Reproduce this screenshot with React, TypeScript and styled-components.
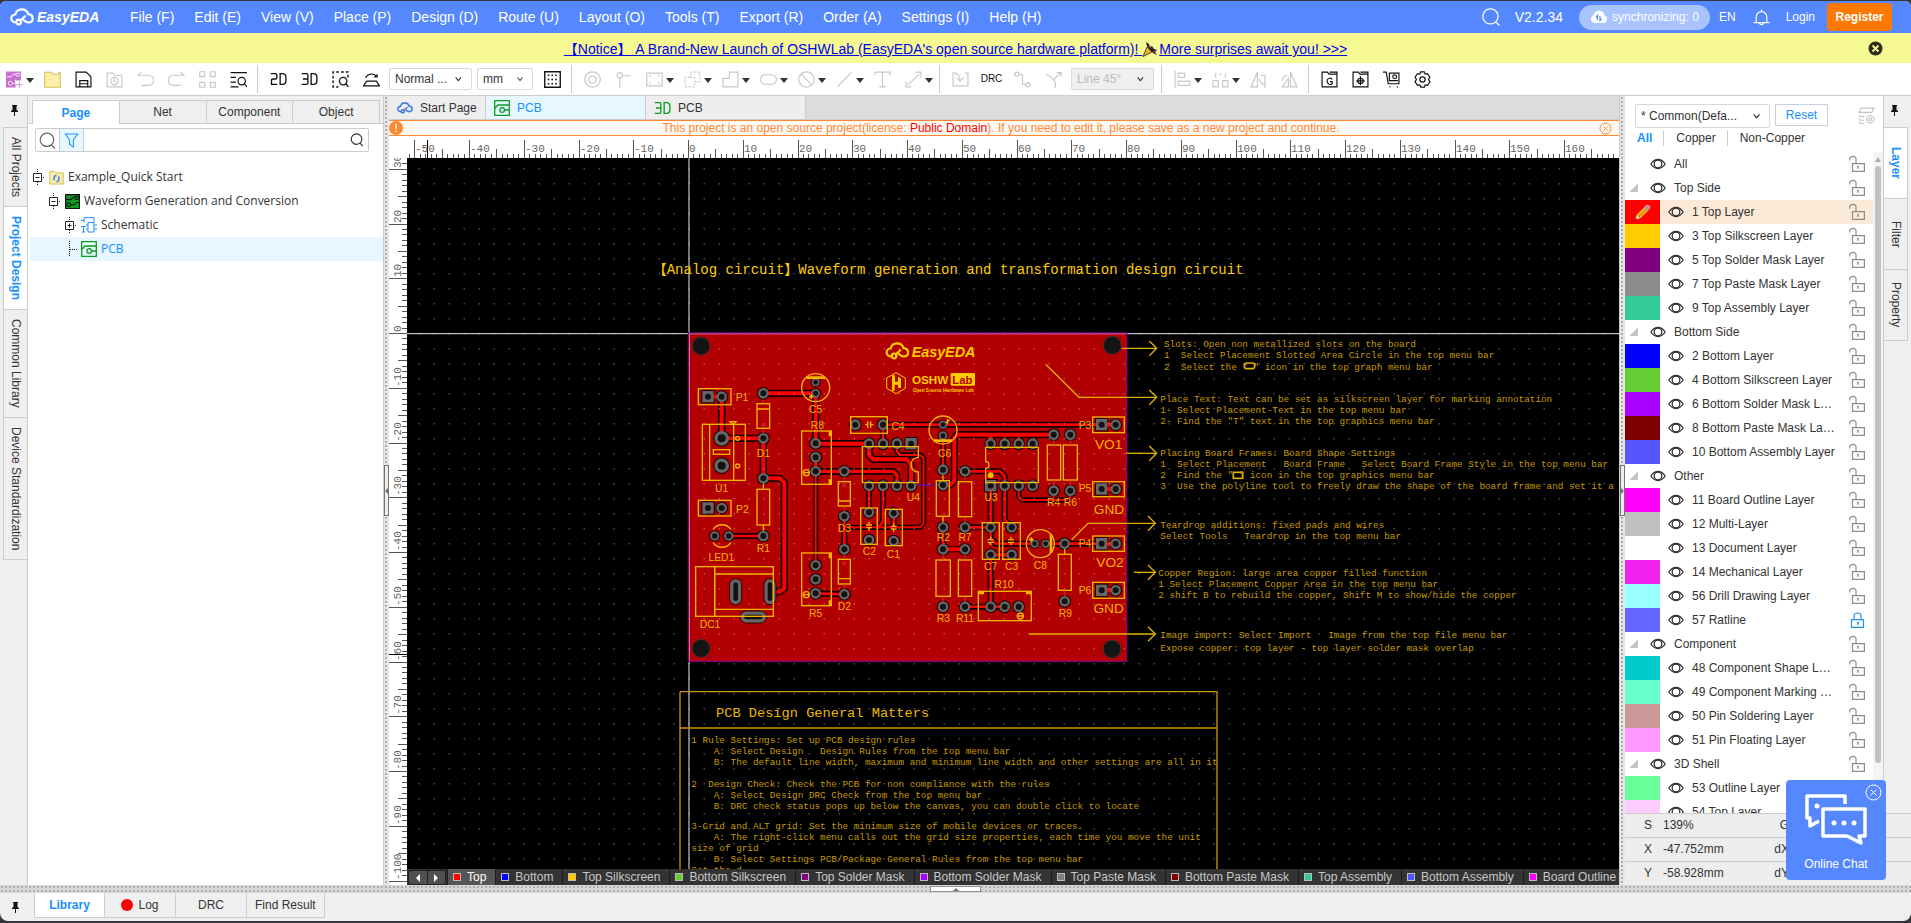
import React from "react";
import styled, { createGlobalStyle, css } from "styled-components";

const Global = createGlobalStyle`
  *, *::before, *::after { box-sizing: border-box; }
  html, body, #root { height: 100%; margin: 0; }
  body { background: #35363a; font: 12px/16px "Liberation Sans", "Noto Sans CJK SC", sans-serif; color: #333; }
  button { font: inherit; color: inherit; background: none; border: 0; padding: 0; margin: 0; cursor: pointer; }
  ul { list-style: none; margin: 0; padding: 0; }
`;

const BLUE = "#5588ff";
const ACCENT = "#1890ff";
const LINE = "#cccccc";

/* ---------- frame ---------- */
const Frame = styled.div`height: 100vh; padding: 1px 0 2px; display: flex;`;
const Shell = styled.div`
  flex: 1; min-width: 0; display: flex; flex-direction: column; background: #efefef;
  border-radius: 6px 6px 8px 8px; overflow: hidden; position: relative;
`;

/* ---------- header ---------- */
const Header = styled.header`
  height: 32px; flex: none; background: ${BLUE}; color: #fff; display: flex; align-items: center; padding: 0 19px 0 10px;
`;
const Brand = styled.a`
  display: flex; align-items: center; gap: 3px; width: 120px; color: #fff; text-decoration: none;
  font: italic bold 14px/20px "Liberation Sans", sans-serif;
`;
const Menu = styled.nav`display: flex; gap: 20px; font-size: 14px; flex: 1; button { white-space: nowrap; }`;
const HeaderTools = styled.div`display: flex; align-items: center;`;
const Version = styled.span`font-size: 14px; margin: 0 16px 0 15px;`;
const SyncPill = styled.button`
  height: 25px; width: 131px; border-radius: 13px; background: #a9c3ff; display: flex; align-items: center; justify-content: center; gap: 4px; margin-right: 9px;
`;
const BellBtn = styled.button`margin: 0 16px 0 17px; display: flex;`;
const Register = styled.button`
  margin-left: 12px; width: 65px; height: 28px; background: #ff7800; border-radius: 4px; font-weight: bold;
`;

const Notice = styled.div`
  height: 30px; flex: none; background: #f6f892; display: flex; align-items: center; padding: 0 28px 0 43px; font-size: 14px;
  a { color: #0000ee; margin: 0 auto; padding-top: 2px; display: flex; }
`;

/* ---------- toolbar ---------- */
const Bar = styled.div`
  height: 33px; flex: none; background: #fff; border-bottom: 1px solid ${LINE}; display: flex; align-items: center; margin-left: -1px;
`;
const Tool = styled.button<{ $off?: boolean; $caret?: boolean }>`
  width: ${(p) => (p.$caret ? 38 : 31)}px; height: 32px; flex: none; display: flex; align-items: center; gap: 3px;
  padding-left: ${(p) => (p.$caret ? 7 : 0)}px; justify-content: ${(p) => (p.$caret ? "flex-start" : "center")};
  color: ${(p) => (p.$off ? "#c8c8c8" : "#111")}; font-size: 10px;
`;
const Caret = styled.span`border: 4px solid transparent; border-top: 5px solid #333; border-bottom: 0; margin-top: 3px;`;
const Sep = styled.i`width: 1px; height: 28px; background: ${LINE}; margin: 0 5px 0 3px; flex: none;`;
const SelectBox = styled.span<{ $w: number; $h?: number; $off?: boolean }>`
  width: ${(p) => p.$w}px; height: ${(p) => p.$h ?? 22}px; border: 1px solid #d6d8de; border-radius: 2px; display: flex; align-items: center; flex: none;
  background: ${(p) => (p.$off ? "#efefef" : "#fff")}; padding-right: 8px;
  select {
    appearance: none; border: 0; background: none; font: inherit; padding: 0 0 0 5px; width: 100%; min-width: 0; outline: 0; opacity: 1;
    color: ${(p) => (p.$off ? "#bbb" : "#333")};
  }
`;
const BarSelect = styled(SelectBox)`margin: 0 4px 0 2px; & + & { margin-left: 1px; }`;

/* ---------- body ---------- */
const Body = styled.div`flex: 1; min-height: 0; display: flex;`;

const Strip = styled.aside<{ $side: "left" | "right" }>`
  flex: none; width: 28px; display: flex; flex-direction: column; background: #efefef;
  ${(p) => p.$side === "left"
    ? css`padding-left: 4px; border-right: 1px solid ${LINE};`
    : css`padding-right: 4px; border-left: 1px solid ${LINE};`}
`;
const PinBtn = styled.button`height: 32px; flex: none; display: flex; align-items: center; justify-content: center; padding: 0 3px 4px 0;`;
const SideTab = styled.button<{ $on?: boolean }>`
  writing-mode: vertical-rl; min-height: 72px; padding: 9px 0; display: flex; align-items: center; justify-content: center;
  border: 1px solid ${LINE}; margin: -1px -1px 0; line-height: 20px;
  ${(p) => p.$on && css`background: #fff; color: ${ACCENT}; font-weight: bold;`}
`;

const LeftPanel = styled.section`flex: none; width: 355px; background: #fff; display: flex; flex-direction: column;`;
const PanelTabs = styled.div`background: #efefef; padding: 4px 3px 0 4px; display: flex; border-bottom: 1px solid ${LINE};`;
const PanelTab = styled.button<{ $on?: boolean }>`
  flex: 1; height: 23px; border: 1px solid ${LINE}; border-bottom: 0; & + & { border-left: 0; }
  ${(p) => p.$on && css`background: #fff; color: ${ACCENT}; font-weight: bold; height: 24px; margin-bottom: -1px;`}
`;
const Search = styled.div`
  margin: 4px 14px 0 7px; height: 24px; border: 1px solid ${LINE}; border-radius: 2px; display: flex; align-items: center; padding-right: 4px;
  input { flex: 1; min-width: 0; border: 0; outline: 0; font: inherit; height: 20px; }
`;
const SearchCell = styled.button<{ $on?: boolean }>`
  width: 24px; height: 22px; display: flex; align-items: center; justify-content: center; border-right: 1px solid ${LINE};
  color: ${(p) => (p.$on ? ACCENT : "#666")}; background: ${(p) => (p.$on ? "#e6f7ff" : "none")};
`;
const Tree = styled.ul`margin: 13px 0 0 2px; font: 12px/24px "Open Sans", sans-serif;`;
const TreeRow = styled.li<{ $depth: number; $on?: boolean }>`
  height: 24px; display: flex; align-items: center; gap: 4px; padding-left: ${(p) => 3 + p.$depth * 16}px;
  ${(p) => p.$on && css`background: #e6f7ff; color: ${ACCENT};`}
`;

const dots = css`background-image: radial-gradient(circle, #b0b0b0 1px, transparent 1px); background-size: 4px 4px;`;
const VSplit = styled.div`
  flex: none; width: 6px; background-color: #e6e6e6; ${dots} border-left: 1px solid ${LINE};
  display: flex; align-items: center;
`;
const HSplit = styled.div`flex: none; height: 8px; background-color: #d8d8d8; ${dots} display: flex; justify-content: center; align-items: center;`;
const VGrip = styled.i<{ $dir: "left" | "right" }>`
  width: 5px; height: 51px; border: 1px solid #7a6e6e; background: #eee; flex: none; display: flex; align-items: center; justify-content: center;
  &::after { content: ""; border: 3px solid transparent; border-${(p) => (p.$dir === "left" ? "right" : "left")}-color: #776e6e; border-${(p) => p.$dir}: 0; }
`;
const HGrip = styled.i`width: 51px; height: 6px; border: 1px solid #9a9090; background: #fff; display: flex; justify-content: center; align-items: center;
  &::after { content: ""; border: 3px solid transparent; border-bottom-color: #776e6e; border-top: 0; }`;

/* ---------- editor ---------- */
const Editor = styled.main`flex: 1; min-width: 0; display: flex; flex-direction: column; background: #fff;`;
const DocTabs = styled.div`height: 24px; flex: none; background: #dcdcdc; display: flex; border-bottom: 1px solid ${LINE};`;
const DocTab = styled.button<{ $on?: boolean; $wide?: boolean }>`
  width: ${(p) => (p.$wide ? 160 : 97)}px; height: 23px; display: flex; align-items: center; gap: 7px; padding-left: 8px; background: ${(p) => (p.$on ? "#e6f7ff" : "#eeeeee")};
  color: ${(p) => (p.$on ? ACCENT : "#333")}; border-right: 1px solid ${LINE};
`;
const Green = styled.span`color: #0a9d20; display: flex;`;
const License = styled.div`
  height: 16px; flex: none; border: 1px solid #ff8833; border-width: 1px 0; background: #fff8f3; color: #ff8833; display: flex; align-items: center; line-height: 14px;
  p { margin: 0 auto; } strong { color: #ff0000; font-weight: normal; } padding-right: 7px;
`;
const RulerH = styled.svg`display: block; width: 100%; height: 22px; flex: none;`;
const Stage = styled.div`flex: 1; min-height: 0; display: flex;`;
const RulerV = styled.svg`display: block; width: 18px; height: 100%; flex: none;`;
const StageCol = styled.div`flex: 1; min-width: 0; display: flex; flex-direction: column;`;
const Canvas = styled.div`
  flex: 1; min-height: 0; overflow: hidden; background: #000;
  svg { display: block; }
`;
const LayerTabs = styled.div`height: 16px; flex: none; background: #333; color: #c8c8c8; display: flex; overflow: hidden;`;
const Nav = styled.div`
  width: 38px; margin: 1px 1px 0 1px; border: 1px solid #222; border-radius: 3px; background: #505050; display: flex; flex: none;
  button { flex: 1; display: flex; align-items: center; justify-content: center; } button + button { border-left: 1px solid #222; }
`;
const Prev = styled.i`border: 4px solid transparent; border-right-color: #fff; border-left: 0;`;
const Next = styled.i`border: 4px solid transparent; border-left-color: #fff; border-right: 0;`;
const LayerTab = styled.button<{ $on?: boolean }>`
  display: flex; align-items: center; gap: 6px; padding: 0 9px 0 5px; border-left: 1px solid #1c1c1c; white-space: nowrap; flex: none;
  ${(p) => p.$on && css`background: #555; color: #fff;`}
`;
const Chip = styled.i<{ $c: string }>`width: 8px; height: 8px; border: 1px solid #bbb; background: ${(p) => p.$c};`;

/* ---------- right panel ---------- */
const Right = styled.div`flex: none; width: 286px; display: flex; flex-direction: column; background: #ededed;`;
const RightTop = styled.div`flex: 1; min-height: 0; display: flex;`;
const LayerPanel = styled.section`flex: 1; min-width: 0; background: #fff; display: flex; flex-direction: column;`;
const PanelHead = styled.div`display: flex; align-items: flex-start; padding: 8px 8px 0 10px;`;
const ResetBtn = styled.button`width: 53px; height: 22px; border: 1px solid #c8d0dc; color: ${ACCENT}; margin-left: 5px;`;
const StackBtn = styled.button`margin: 3px 0 0 auto; color: #c4c4c4; display: flex;`;
const Filters = styled.div`display: flex; height: 20px; margin: 0 0 4px; padding-left: 12px; align-items: center;
  button + button { border-left: 1px solid ${LINE}; margin-left: 11px; padding-left: 12px; }`;
const FilterBtn = styled.button<{ $on?: boolean }>`${(p) => p.$on && css`color: ${ACCENT}; font-weight: bold;`}`;
const ListWrap = styled.div`flex: 1; min-height: 0; display: flex; overflow: hidden;`;
const List = styled.ul`flex: 1; min-width: 0;`;
const LayerRow = styled.li<{ $on?: boolean }>`
  height: 24px; display: flex; align-items: center; padding-right: 8px; background: ${(p) => (p.$on ? "#faead7" : "#fff")};
`;
const Swatch = styled.span<{ $c: string }>`
  width: 35px; height: 24px; background: ${(p) => p.$c}; flex: none; margin-right: 8px; display: flex; align-items: center; justify-content: center;
`;
const Fold = styled.span<{ $hide?: boolean }>`
  width: 8px; height: 8px; margin: 0 12px 0 5px; flex: none;
  background: ${(p) => (p.$hide ? "none" : "linear-gradient(135deg, transparent 50%, #c4c4c4 50%)")};
`;
const IconBtn = styled.button`display: flex; flex: none;`;
const Name = styled.span`flex: 0 1 145px; margin: 0 auto 0 8px; min-width: 0; overflow: hidden; text-overflow: ellipsis; white-space: nowrap;`;
const Scroll = styled.div`width: 10px; flex: none; background: #f4f4f4; display: flex; flex-direction: column; align-items: center; padding-top: 5px;
  &::before { content: ""; border: 3px solid transparent; border-bottom: 5px solid #aaa; border-top: 0; margin-bottom: 4px; flex: none; }`;
const Thumb = styled.i`width: 6px; height: 597px; border-radius: 3px; background: #c1c1c1; flex: none;`;
const Status = styled.dl`
  margin: 0; flex: none; display: grid; grid-template-columns: 27px 98px 39px 1fr; line-height: 23px; height: 72px;
  dt, dd { margin: 0; border-top: 1px solid ${LINE}; height: 24px; } dt { text-align: right; } dd { padding-left: 11px; }
`;

/* ---------- bottom ---------- */
const Bottom = styled.footer`height: 28px; flex: none; display: flex; align-items: flex-start;`;
const BottomPin = styled.button`width: 34px; height: 28px; display: flex; align-items: center; justify-content: center; padding-right: 4px;`;
const BottomTab = styled.button<{ $on?: boolean }>`
  height: 25px; min-width: 71px; padding: 0 8px; border: 1px solid ${LINE}; border-top: 0; & + & { border-left: 0; } display: flex; align-items: center; justify-content: center; gap: 5px;
  ${(p) => p.$on && css`background: #fff; color: ${ACCENT}; font-weight: bold;`}
`;
const Red = styled.i`width: 12px; height: 12px; border-radius: 50%; background: #ff0000;`;

const Chat = styled.aside`
  position: absolute; right: 25px; bottom: 41px; width: 100px; height: 100px; background: ${BLUE}; border-radius: 4px; color: #fff;
  display: flex; flex-direction: column; align-items: center; justify-content: flex-end; gap: 10px; padding-bottom: 8px;
`;
const ChatClose = styled.button`position: absolute; top: 4px; right: 4px; display: flex;`;

/* ---------- icons ---------- */
type IconProps = { d: string; size?: number; fill?: boolean; w?: number; children?: React.ReactNode };
const Icon = ({ d, size = 17, fill, w = 1.1, children }: IconProps) => (
  <svg width={size} height={size} viewBox="0 0 16 16" fill={fill ? "currentColor" : "none"} stroke={fill ? "none" : "currentColor"} strokeWidth={w} aria-hidden>
    <path d={d} />
    {children}
  </svg>
);
const Cloud = ({ w = 24, c = "currentColor", sw = 2.2 }: { w?: number; c?: string; sw?: number }) => (
  <svg width={w} height={(w * 18) / 24} viewBox="0 0 24 18" fill="none" stroke={c} strokeWidth={sw} strokeLinecap="round" aria-hidden>
    <path d="M6 14.5C3 14.500 1.300 12.600 1.300 10.500C1.300 8.300 3 6.600 5.300 6.500C6 3.300 8.600 1.300 11.700 1.300C15 1.300 17.400 3.200 18.200 6.200C20.800 6.400 22.700 8.200 22.700 10.500C22.700 12.900 20.900 14.500 18.500 14.500C16 14.500 14.600 13.200 13.200 11.800" />
    <path d="M10.300 12.500L15 8.200" />
    <circle cx="8.700" cy="14" r="2.300" />
  </svg>
);
const Chevron = () => <Icon size={10} w={2} d="M3 5l5 6 5-6" />;
const Eye = () => (
  <Icon size={16} w={1.3} d="M.8 8C2.800 5 5.200 3.500 8 3.500S13.200 5 15.200 8C13.200 11 10.800 12.500 8 12.500S2.800 11 .8 8z">
    <circle cx="8" cy="8" r="3.800" />
  </Icon>
);
const Lock = ({ closed }: { closed?: boolean }) => (
  <svg width="16" height="18" viewBox="0 0 16 18" fill="none" stroke={closed ? ACCENT : "#8c8c8c"} strokeWidth="1.200" aria-hidden>
    <path d={closed ? "M2.500 8.600H14.500V16.400H2.500zM5 8.500V5C5 1 12 1 12 5V8.500" : "M3.500 8.600H15.400V16.400H3.500zM.7 5.500V3.800C.7 .6 7 .6 7 3.800V8.500"} />
    <path d="M9 11v3M8 11.700h2" />
  </svg>
);
const Pin = () => (
  <svg width="7" height="11" viewBox="0 0 7 11" fill="#111" aria-hidden>
    <path d="M1 0H6V1H5.500V5L7 6V7H4V11H3V7H0V6L1.500 5V1H1z" />
  </svg>
);
const PcbIcon = () => (
  <svg width="16" height="16" viewBox="0 0 16 16" fill="none" stroke="#0a9d20" strokeWidth="1.300" aria-hidden>
    <path d="M.7 .7H15.300V15.300H.7zM.7 8.500L4 5H15M10.500 10H15" />
    <circle cx="8.200" cy="10" r="2.300" />
  </svg>
);

type ToolDef = { n: string; off?: boolean; caret?: boolean; el: React.ReactNode };
const t = (n: string, d: string, off = false, caret = false, extra?: React.ReactNode): ToolDef => ({
  n, off, caret, el: <Icon d={d}>{extra}</Icon>,
});
const Dim = ({ s }: { s: string }) => (
  <svg width="17" height="14" viewBox="0 0 20 17" fill="none" stroke="currentColor" strokeWidth="1.600" aria-hidden>
    <path d={s === "2"
      ? "M.5 2H6.500Q8 2 8 3.500V7Q8 8.500 6.500 8.500H3Q1.500 8.500 1.500 10V15H8.500"
      : "M.5 2H6.500Q8 2 8 3.500V13.500Q8 15 6.500 15H.5M2 8.500H8"} />
    <path d="M12 2V15H14.500Q19 15 19 10.500V6.500Q19 2 14.500 2z" />
  </svg>
);
const g1: ToolDef[] = [
  { n: "New", caret: true, el: (
    <svg width="17" height="17" viewBox="0 0 16 16" fill="none" aria-hidden>
      <path d="M0 .5H14V9H9V15.500H0z" fill="#c56fd0" />
      <path d="M1 5.500H4.500L7 3H9.500M6.500 11.500H9V8" stroke="#fff" strokeWidth=".8" />
      <circle cx="11" cy="3.500" r="1.600" stroke="#fff" strokeWidth=".8" /><circle cx="4" cy="11.500" r="1.900" stroke="#fff" strokeWidth=".8" />
      <path d="M12.500 10v6M9.500 13h6" stroke="#c0a0c8" />
    </svg>) },
  { n: "Open", el: (
    <svg width="17" height="17" viewBox="0 0 16 16" aria-hidden><path d="M.7 15.300V1.200H7L8.500 3H14V1.200H15.300V15.300z" fill="#faf0ac" stroke="#d8bf58" /></svg>) },
  t("Save", "M1 1H10.500L15 5.500V15H1zM4.500 15V9H12V15M4.500 12H12"),
  t("History", "M1 15V2H6L8 4H15V15z", true, false, <><circle cx="8" cy="9.500" r="3.500" /><path d="M8 7v3h1.500" /></>),
  t("Undo", "M4 1L1 4H11A4.500 4.500 0 0 1 11 13.500H4", true),
  t("Redo", "M12 1L15 4H5A4.500 4.500 0 0 0 5 13.500H12", true),
  t("Arrange", "M.7 .7h4.600v4.600H.7zM10.700 .7h4.600v4.600h-4.600zM.7 10.700h4.600v4.600H.7zM10.700 10.700h4.600v4.600h-4.600z", true),
  t("Find", "M.5 1.500H16M.5 6H5.500M.5 10.500H5.500M.5 15H8", false, false, <><circle cx="11" cy="9.500" r="3.500" /><path d="M13.500 12l2.500 3" /></>),
];
const g2: ToolDef[] = [
  { n: "2D", el: <Dim s="2" /> },
  { n: "3D", el: <Dim s="3" /> },
  { n: "Zoom selection", el: (
    <Icon d="M15 6V1H1V15H6" w={0}><path d="M15 6V1H1V15H6" strokeWidth="1.300" strokeDasharray="2.500 2" /><circle cx="10.500" cy="9.500" r="3.500" strokeWidth="1.200" /><path d="M13 12l2.500 3" strokeWidth="1.200" /></Icon>) },
  t("Flip board", "M3.500 9.500H12.500L15.500 14H.5zM2.500 6.500A6 6 0 0 1 13 5.500M10.500 5.500H13.300V3"),
];
const g3: ToolDef[] = [
  t("Pad", "M8 .8a7.200 7.200 0 1 0 .01 0zM8 4.500a3.500 3.500 0 1 0 .01 0z", true),
  t("Via track", "M4.500 6.500V16M7 4.500H15", true, false, <circle cx="4.500" cy="4" r="2.500" />),
  t("Rectangle region", "M.7 2H15.300V14H.7z", true, true, <path d="M3 4.500h1.500M11.500 4.500h1.500M3 11.500h1.500M11.500 11.500h1.500" strokeWidth="1.500" />),
  { n: "Fill", off: true, caret: true, el: (
    <Icon d="M6 1H15V10H10V15H1V6H6z" w={0}><path d="M6 1H15V10H10V15H1V6H6zM6 6h4v4" strokeWidth="1.100" strokeDasharray="2 1.500" /></Icon>) },
  t("Polygon", "M7 1H15V15H1V7H7z", true, true),
  t("Slot", "M5 3.500H11A4.500 4.500 0 0 1 11 12.500H5A4.500 4.500 0 0 1 5 3.500z", true, true),
  t("Forbidden", "M8 .8a7.200 7.200 0 1 0 .01 0zM3 3L13 13", true, true),
  t("Line", "M1.500 15L14.500 1", true, true),
  t("Text", "M1 4V1H15V4M8 1V15M5 15H11", true),
  t("Dimension", "M2.500 13L13.500 3M1 10v5h5M10 1h5v5", true, true),
];
const g4: ToolDef[] = [
  t("Import changes", "M4 2H1V14H15V2H12M7.500 9C7.500 4 5 2.500 3 2.500M4.500 6.500L7.500 9.500 11 6", true),
  { n: "DRC", el: <span>DRC</span> },
  t("Route", "M4.500 3.500H8V12.500H11", true, false, <><circle cx="2.800" cy="3" r="2" /><circle cx="13" cy="13" r="2" /></>),
  t("Stretch", "M1 3C4 4 6 6 8 8M9 16C11 12 9 9 8 8L15 1.500M11 1.500H15.300V5.500", true),
];
const g5: ToolDef[] = [
  t("Align", "M1 0V16M4 2H10V6H4zM4 9.500H15V13.500H4z", true, true),
  t("Distribute", "M1 15V9H6V15zM10 15V9H15V15zM3.500 2V6M12.500 2V6M8 2V4", true, true),
  t("Rotate", "M7 1V15H1zM10 4H14V15H15M9 7C9 11 12 13 15 13", true),
  t("Mirror", "M9 1V15H15zM6 4A7 7 0 0 0 1 9M1 15H7V7z", true),
];
const g6: ToolDef[] = [
  t("Gerber", "M1 15V1H6L7.500 3H15V15zM10.500 8C9.500 6 5.700 6.500 5.700 9.500S9 13.500 10.500 12V10H8.500M8 1H15V3"),
  t("Pick and place", "M1 15V1H6L7.500 3H15V15zM8 5V13.500M4 9.300H12M8 1H15V3", false, false, <circle cx="8" cy="9.300" r="2.500" />),
  t("Order", "M0 1H3L5 12H15V2H6V9H14M6 15h1M13 15h1", false, false, <circle cx="11" cy="5.500" r="1.800" />),
  t("Settings", "M6.300 .8H9.700L10.500 3 12.700 2.500 15 5.800 13.700 8 15 10.200 12.700 13.500 10.500 13 9.700 15.200H6.300L5.500 13 3.300 13.500 1 10.200 2.300 8 1 5.800 3.300 2.500 5.500 3z", false, false, <circle cx="8" cy="8" r="2.500" />),
];
const Tools = ({ items }: { items: ToolDef[] }) => (
  <>
    {items.map((i) => (
      <Tool key={i.n} aria-label={i.n} $off={i.off} $caret={i.caret}>
        {i.el}
        {i.caret && <Caret />}
      </Tool>
    ))}
  </>
);

/* ---------- rulers ---------- */
const MM = 5.475;
const range = (a: number, b: number) => Array.from({ length: b - a + 1 }, (_, i) => a + i);
const HorizontalRuler = () => (
  <RulerH aria-hidden>
    <g stroke="#555" shapeRendering="crispEdges">
      {range(-51, 330).map((m) => {
        const x = Math.round(299 + m * MM) + 0.5;
        return <line key={m} x1={x} x2={x} y1={m % 10 === 0 ? 4 : m % 5 === 0 ? 13 : 18} y2={22} />;
      })}
      <line x1="38.500" x2="38.500" y1="4" y2="22" stroke="#000" />
    </g>
    <g fill="#666" fontFamily="Liberation Mono, monospace" fontSize="11">
      {range(-5, 16).map((m) => <text key={m} x={Math.round(300 + m * 10 * MM)} y={16}>{m * 10}</text>)}
    </g>
  </RulerH>
);
const VerticalRuler = () => (
  <RulerV aria-hidden>
    <g stroke="#555" shapeRendering="crispEdges">
      {range(-31, 250).map((m) => {
        const y = Math.round(175 + m * MM) + 0.5;
        return <line key={m} y1={y} y2={y} x1={m % 10 === 0 ? 0 : m % 5 === 0 ? 9 : 13} x2={18} />;
      })}
      <line y1="496.500" y2="496.500" x1="0" x2="18" stroke="#000" />
    </g>
    <g fill="#666" fontFamily="Liberation Mono, monospace" fontSize="11">
      {range(-3, 10).map((m) => (
        <text key={m} transform={`translate(12 ${Math.round(174 + m * 10 * MM)}) rotate(-90)`}>{m === 0 ? 0 : -m * 10}</text>
      ))}
    </g>
  </RulerV>
);

/* ---------- board drawing: three drawing units to a screen pixel ---------- */
const GOLD = "#f5b400";
const traces: [string, number][] = [
  ["M-115 230V355H10V475H60L73 488V805L60 815H30", 12],
  ["M-94 648H10", 8],
  ["M10 220H167V371H327V405L340 418H440L453 432V497", 12],
  ["M167 412V454H400L411 465V497", 10],
  ["M167 454V736", 6],
  ["M369 371V314H1025", 8],
  ["M411 371V395L420 405H480L491 415V610L480 622H253", 6],
  ["M327 497V577M369 497V605L355 622M253 589V688M401 580V622", 8],
  ["M167 820L253 823", 8],
  ["M549 347V449", 7],
  ["M549 495H570L583 482V355L592 344H881M692 344V371", 12],
  ["M734 344V371M776 344V371", 6],
  ["M615 454H720L734 468V600L755 622", 8],
  ["M692 497V655L707 671H824M857 671H1025", 8],
  ["M776 497V530L786 540H920L931 530V512M881 512V540", 6],
  ["M615 622H692M549 622V688H615M692 704H755M692 704V860", 8],
  ["M615 860H734", 8],
];
const pads: [number, number, number?][] = [
  [-115, 230], [-115, 355, 22], [-115, 437, 22], [-115, 564], [-136, 648, 14], [-94, 648, 14],
  [10, 220], [10, 355], [10, 475], [10, 648],
  [167, 187, 12], [167, 220, 13], [286, 314], [369, 314], [549, 314, 12], [549, 347, 13],
  [327, 371], [369, 371], [411, 371], [327, 497], [369, 497], [411, 497], [453, 497],
  [167, 370], [167, 412], [167, 454], [253, 454], [253, 589], [253, 688], [253, 823], [167, 736], [167, 778], [167, 820],
  [327, 577], [327, 660], [401, 580], [401, 663], [549, 449], [549, 495], [615, 454], [549, 622], [615, 622], [549, 688], [615, 688],
  [549, 860], [615, 860], [692, 371], [734, 371], [776, 371], [818, 371], [734, 497], [776, 497], [818, 497],
  [881, 344], [931, 344], [881, 512], [931, 512], [692, 622], [755, 622], [692, 704], [755, 704], [824, 671, 12], [857, 671, 12],
  [914, 671], [914, 844], [692, 860], [734, 860], [776, 860], [1067, 314], [1067, 507], [1067, 671], [1067, 811],
];
const squares = [[-156, 230], [-156, 564], [453, 371], [692, 497], [1025, 314], [1025, 507], [1025, 671], [1025, 811]];
const slots = [[-91, 776, 36, 78], [12, 776, 36, 78], [-59, 873, 78, 36]];
const boxes = [
  [-185, 206, 98, 48], [-9, 251, 38, 74], [-173, 313, 129, 168], [-140, 389, 49, 14], [-9, 508, 38, 107], [-185, 541, 98, 47],
  [-193, 740, 57, 149], [-136, 740, 176, 149], [125, 333, 89, 160], [235, 485, 36, 73], [235, 718, 36, 74], [125, 699, 89, 158],
  [272, 290, 110, 50], [302, 564, 50, 109], [376, 568, 51, 109], [529, 482, 39, 107], [595, 485, 40, 105], [528, 720, 43, 109],
  [595, 720, 40, 109], [862, 375, 40, 105], [910, 375, 42, 105], [667, 608, 51, 110], [728, 608, 53, 110], [895, 703, 39, 108],
  [655, 814, 159, 88], [998, 291, 95, 47], [998, 485, 95, 45], [998, 648, 95, 46], [998, 787, 95, 48],
];
const labels: [string, number, number][] = [
  ["P1", -54, 243], ["D1", 10, 410], ["U1", -115, 515], ["P2", -53, 578], ["R1", 10, 697], ["LED1", -116, 724], ["DC1", -150, 924],
  ["C5", 167, 280], ["R8", 172, 327], ["C4", 414, 331], ["C6", 554, 410], ["U4", 460, 542], ["D3", 253, 636], ["C2", 328, 705],
  ["C1", 400, 713], ["R2", 550, 664], ["R7", 615, 664], ["U3", 693, 542], ["R4", 881, 557], ["R6", 931, 557], ["C7", 692, 750],
  ["C3", 755, 750], ["C8", 841, 747], ["R9", 916, 891], ["R10", 732, 805], ["R3", 550, 907], ["R11", 615, 907], ["R5", 167, 891],
  ["D2", 253, 869], ["P3", 975, 327], ["P5", 975, 517], ["P4", 975, 681], ["P6", 975, 821],
];
const bigLabels: [string, number, number][] = [["VO1", 1046, 388], ["GND", 1047, 582], ["VO2", 1050, 740], ["GND", 1046, 879]];
const arrows = ["M1085 85H1190", "M857 133L957 232H1190", "M1098 400H1190", "M935 659L984 610H1186", "M1122 757H1186", "M806 942H1186"];
const heads = [[1190, 85], [1190, 232], [1190, 400], [1186, 610], [1186, 757], [1186, 942]];
const notes: [number, number, string][] = [
  [1212, 82, "Slots: Open non metallized slots on the board"],
  [1212, 115, "1  Select Placement Slotted Area Circle in the top menu bar"],
  [1212, 149, '2  Select the " " icon in the top graph menu bar'],
  [1201, 245, "Place Text: Text can be set as silkscreen layer for marking annotation"],
  [1201, 278, "1- Select Placement-Text in the top menu bar"],
  [1201, 311, '2- Find the "T" text in the top graphics menu bar'],
  [1201, 409, "Placing Board Frames: Board Shape Settings"],
  [1201, 442, "1  Select Placement   Board Frame   Select Board Frame Style in the top menu bar"],
  [1201, 475, '2  Find the " " icon in the top graphics menu bar'],
  [1201, 508, "3  Use the polyline tool to freely draw the shape of the board frame and set it a"],
  [1201, 623, "Teardrop additions: fixed pads and wires"],
  [1201, 657, "Select Tools   Teardrop in the top menu bar"],
  [1195, 767, "Copper Region: large area copper filled function"],
  [1195, 800, "1 Select Placement Copper Area in the top menu bar"],
  [1195, 834, "2 shift B to rebuild the copper, Shift M to show/hide the copper"],
  [1201, 953, "Image import: Select Import   Image from the top file menu bar"],
  [1201, 994, "Expose copper: top layer - top layer solder mask overlap"],
  [-206, 1268, "1 Rule Settings: Set up PCB design rules"],
  [-206, 1302, "    A: Select Design   Design Rules from the top menu bar"],
  [-206, 1335, "    B: The default line width, maximum and minimum line width and other settings are all in it"],
  [-206, 1401, "2  Design Check: Check the PCB for non compliance with the rules"],
  [-206, 1435, "    A: Select Design DRC Check from the top menu bar"],
  [-206, 1468, "    B: DRC check status pops up below the canvas, you can double click to locate"],
  [-206, 1527, "3-Grid and ALT grid: Set the minimum size of mobile devices or traces."],
  [-206, 1560, "    A: The right-click menu calls out the grid size properties, each time you move the unit"],
  [-206, 1593, "size of grid"],
  [-206, 1627, "    B: Select Settings PCB/Package General Rules from the top menu bar"],
  [-206, 1660, "Set the d"],
];
const Note = styled.text`white-space: pre;`;

const Board = () => (
  <svg width="1211" height="711" viewBox="-1059 -486 3633 2133" overflow="visible" role="img" aria-label="PCB layout">
    <defs>
      <pattern id="grid" x="-214" y="40" width="45" height="45" patternUnits="userSpaceOnUse"><rect width="3" height="3" fill="#fff" opacity=".65" /></pattern>
    </defs>
    <rect x="-215" y="39" width="1315" height="985" fill="#b20000" />
    <rect x="-211" y="43" width="1307" height="977" fill="none" stroke="#d00000" strokeWidth="2" />
    <g fill="none" stroke="#190000" strokeLinejoin="round" strokeLinecap="round">
      {traces.map(([d, w]) => <path key={d} d={d} strokeWidth={w + 10} />)}
    </g>
    <g fill="#190000">
      {pads.map(([x, y, r = 16]) => <circle key={`${x} ${y}`} cx={x} cy={y} r={r + 3} />)}
      {squares.map(([x, y]) => <rect key={`${x} ${y}`} x={x - 20} y={y - 20} width="40" height="40" />)}
    </g>
    <g fill="none" stroke="#fa0000" strokeLinejoin="round" strokeLinecap="round">
      {traces.map(([d, w]) => <path key={d} d={d} strokeWidth={w} />)}
      <path d="M-156 230H-115M1025 314H1067M1025 507H1067M1025 671H1067M1025 811H1067M549 688H615M692 704H755" strokeWidth="12" />
    </g>
    <path d="M453 495H549" stroke="#5a10a0" strokeWidth="4" />
    <rect x="-1059" y="-500" width="9000" height="9000" fill="url(#grid)" />
    <path d="M-1059 41H9000M-213 -486V9000" stroke="#e8e8e8" strokeWidth="3" />
    <rect x="-215" y="39" width="1315" height="985" fill="none" stroke="#800080" strokeWidth="4" />
    {[[-177, 78], [-177, 985], [1057, 76], [1056, 987]].map(([x, y]) => (
      <circle key={`${x} ${y}`} cx={x} cy={y} r="27" fill="#141414" stroke="#443030" strokeWidth="3" />
    ))}
    <g fill="#666">
      {pads.map(([x, y, r = 16]) => <circle key={`${x} ${y}`} cx={x} cy={y} r={r} />)}
      {squares.map(([x, y]) => <rect key={`${x} ${y}`} x={x - 17} y={y - 17} width="34" height="34" />)}
    </g>
    <g fill="#121212">
      {pads.map(([x, y, r = 16]) => <circle key={`${x} ${y}`} cx={x} cy={y} r={r / 2 + 1} />)}
      {squares.map(([x, y]) => <circle key={`${x} ${y}`} cx={x} cy={y} r="9" />)}
    </g>
    {slots.map(([x, y, w, h]) => (
      <g key={`${x} ${y}`}>
        <rect x={x} y={y} width={w} height={h} rx="18" fill="#666" stroke="#300" strokeWidth="3" />
        <rect x={x + 11} y={y + 11} width={w - 22} height={h - 22} rx="7" fill="#121212" />
      </g>
    ))}
    <g fill="none" stroke={GOLD} strokeWidth="4">
      {boxes.map(([x, y, w, h]) => <rect key={`${x} ${y}`} x={x} y={y} width={w} height={h} />)}
      <path d="M-9 267H29M-151 313V481M-79 313V481M-136 762H40M-136 868H40M235 543H271M235 776H271M-90 305H-72L-81 314z" />
      <path d="M210 333V348M210 478V493M210 699V715M210 841V857M655 819H672M798 819H814" strokeWidth="8" />
      <path d="M10 492V508M10 615V632M549 466V482M549 589V606M914 687V703M569 300L557 308M563 297V311" />
      <path d="M307 380H475V412C446 412 446 456 475 456V488H307zM677 382H835V488H677V445C690 445 690 425 677 425z" />
      <path d="M-141 629A32 32 0 0 1 -87 629M-141 667A32 32 0 0 0 -87 667" />
      <circle cx="-67" cy="355" r="6" /><circle cx="-67" cy="438" r="6" />
      <circle cx="167" cy="203" r="42" /><circle cx="549" cy="330" r="42" /><circle cx="841" cy="671" r="42" />
      <path d="M139 173H195M521 362H577M873 643V699" strokeWidth="8" />
      {[[139, 458], [139, 824], [781, 888]].map(([x, y]) => <path key={y} d={`M${x - 9} ${y}a9 9 0 1 0 18 0a9 9 0 1 0 -18 0H${x + 9}`} />)}
      <path d="M316 314H323V304V324M332 304V324M332 314H340M327 606V615H318H336M327 632V623H318H336M401 610V619H392H410M401 636V627H392H410M692 650V659H683H701M692 676V667H683H701M753 650V659H744H762M753 676V667H744H762" />
      <path d="M147 230H161M154 223V237M807 659H821M814 652V666" strokeWidth="5" />
    </g>
    <circle cx="692" cy="466" r="9" fill={GOLD} />
    <path
      d="M10 240V250M10 327V340M3 315H17M10 308V322M253 470V484M246 496H260M253 489V503M253 560V574M253 704V717M246 730H260M253 723V737M253 794V808M615 470V484M615 591V606M549 704V718M549 830V846M615 704V718M615 830V846M881 360V374M931 360V374M881 482V497M931 482V497M914 812V828"
      stroke="#d8202c" strokeWidth="5" opacity=".8"
    />
    <g fill={GOLD} fontFamily="Liberation Sans, sans-serif" textAnchor="middle">
      {labels.map(([s, x, y]) => <text key={s} x={x} y={y} fontSize="31">{s}</text>)}
      {bigLabels.map(([s, x, y]) => <text key={y} x={x} y={y} fontSize="41">{s}</text>)}
    </g>
    <g fill="#ffcc00" fontFamily="Liberation Sans, sans-serif" fontWeight="bold">
      <g transform="translate(376 66) scale(3)"><Cloud c="#ffcc00" /></g>
      <text x="455" y="112" fontSize="43" fontStyle="italic">EasyEDA</text>
      <path d="M408 158L436 174V205L408 221L380 205V174z" fill="none" stroke="#ffcc00" strokeWidth="3" />
      <path d="M396 166V212H404V194H414V204H423V175L414 170V185H405V166z" />
      <text x="456" y="192" fontSize="35">OSHW</text>
      <rect x="572" y="159" width="73" height="38" rx="4" />
      <text x="577" y="191" fontSize="34" fill="#b20000">Lab</text>
      <text x="458" y="216" fontSize="14">Open Source Hardware Lab</text>
    </g>
    <g fill="none" stroke="#e0b000" strokeWidth="4">
      {arrows.map((d) => <path key={d} d={d} />)}
      {heads.map(([x, y]) => <path key={y} d={`M${x - 22} ${y - 22}L${x} ${y}L${x - 22} ${y + 22}`} />)}
      <path d="M-240 1115H1371V2600M-240 1115V2600M-240 1224H1371" stroke="#c89800" />
      <rect x="1453" y="129" width="31" height="17" rx="7" strokeWidth="5" />
      <rect x="1420" y="457" width="28" height="18" strokeWidth="5" />
    </g>
    <g fill="#c49a00" fontFamily="Liberation Mono, monospace" fontSize="28">
      {notes.map(([x, y, s]) => <Note key={y} x={x} y={y}>{s}</Note>)}
    </g>
    <g fill="#ffcc00" fontFamily="Liberation Mono, Noto Sans CJK SC, monospace">
      <text x="-322" y="-139" fontSize="42">【Analog circuit】Waveform generation and transformation design circuit</text>
      <text x="-132" y="1190" fontSize="41" fill="#e8b800">PCB Design General Matters</text>
    </g>
  </svg>
);

/* ---------- data ---------- */
const menus = ["File (F)", "Edit (E)", "View (V)", "Place (P)", "Design (D)", "Route (U)", "Layout (O)", "Tools (T)", "Export (R)", "Order (A)", "Settings (I)", "Help (H)"];
const layerTabs: [string, string][] = [
  ["Top", "#ff0000"], ["Bottom", "#0000ff"], ["Top Silkscreen", "#ffcc00"], ["Bottom Silkscreen", "#66cc33"], ["Top Solder Mask", "#800080"],
  ["Bottom Solder Mask", "#aa00ff"], ["Top Paste Mask", "#808080"], ["Bottom Paste Mask", "#800000"], ["Top Assembly", "#33cc99"],
  ["Bottom Assembly", "#5555ff"], ["Board Outline", "#ff00ff"],
];
const layers: [string, string?][] = [
  ["All"], ["Top Side"], ["1 Top Layer", "#ff0000"], ["3 Top Silkscreen Layer", "#ffcc00"], ["5 Top Solder Mask Layer", "#800080"],
  ["7 Top Paste Mask Layer", "#8c8c8c"], ["9 Top Assembly Layer", "#33cc99"], ["Bottom Side"], ["2 Bottom Layer", "#0000ff"],
  ["4 Bottom Silkscreen Layer", "#66cc33"], ["6 Bottom Solder Mask Layer", "#aa00ff"], ["8 Bottom Paste Mask Layer", "#800000"],
  ["10 Bottom Assembly Layer", "#5555ff"], ["Other"], ["11 Board Outline Layer", "#ff00ff"], ["12 Multi-Layer", "#c0c0c0"],
  ["13 Document Layer", "#ffffff"], ["14 Mechanical Layer", "#f022f0"], ["56 Drill Drawing Layer", "#99ffff"], ["57 Ratline", "#6464ff"],
  ["Component"], ["48 Component Shape Layer", "#00cccc"], ["49 Component Marking Layer", "#66ffcc"], ["50 Pin Soldering Layer", "#cc9999"],
  ["51 Pin Floating Layer", "#ff99ff"], ["3D Shell"], ["53 Outline Layer", "#66ff99"], ["54 Top Layer", "#ffccff"],
];
const Pencil = () => (
  <svg width="17" height="17" viewBox="0 0 16 16" aria-hidden>
    <path d="M1 15L2.500 10L6 13.500z" fill="#f4d3a0" /><path d="M1 15l.6-2 1.400 1.400z" fill="#333" />
    <path d="M2.500 10L9.500 3L13 6.500L6 13.500z" fill="#ffb020" /><path d="M4 11.500L11 4.500L12 5.500L5 12.500z" fill="#d98a10" />
    <path d="M9.500 3L10.800 1.700L14.300 5.200L13 6.500z" fill="#9ab0b8" /><path d="M10.800 1.700Q12.500 0 14.500 1.500T14.300 5.200z" fill="#e58a90" />
  </svg>
);
const Expander = ({ open }: { open?: boolean }) => (
  <svg width="12" height="24" viewBox="0 0 12 24" fill="none" stroke="#222" aria-hidden>
    <path d="M.5 8.500H8.500V16.500H.5zM2.500 12.500H6.500" />{!open && <path d="M4.500 10.500V14.500" />}
    <path d="M4.500 4V8M4.500 17V20M10 12.500H12" strokeDasharray="1 1" />
  </svg>
);
const Branch = () => (
  <svg width="12" height="24" viewBox="0 0 12 24" fill="none" stroke="#222" aria-hidden><path d="M4.500 4V19M5 12.500H12" strokeDasharray="1 1" /></svg>
);

export default function App() {
  return (
    <Frame>
      <Global />
      <Shell>
        <Header>
          <Brand href="#"><Cloud /><span>EasyEDA</span></Brand>
          <Menu>{menus.map((m) => <button key={m}>{m}</button>)}</Menu>
          <HeaderTools>
            <IconBtn aria-label="Search"><Icon size={18} d="M7.500 .8a6.700 6.700 0 1 0 .01 0zM12.300 12.300L15.500 15.500" /></IconBtn>
            <Version>V2.2.34</Version>
            <SyncPill>
              <svg width="18" height="14" viewBox="0 0 18 14" aria-hidden>
                <path d="M4.500 13A4 4 0 0 1 3.500 5.300A5.500 5.500 0 0 1 14.300 5.200A4 4 0 0 1 13.500 13z" fill="#fff" />
                <path d="M7.500 10V5.500L6 7M10 6V10.500L11.500 9" fill="none" stroke={BLUE} strokeWidth="1.200" />
              </svg>
              synchronizing: 0
            </SyncPill>
            <button>EN</button>
            <BellBtn aria-label="Notifications"><Icon size={17} d="M8 .5V2M3 12.500V7.500A5 5 0 0 1 13 7.500V12.500M.5 12.800H15.500M6 13.500Q8 16 10 13.500" /></BellBtn>
            <button>Login</button>
            <Register>Register</Register>
          </HeaderTools>
        </Header>
        <Notice>
          <a href="#">
            【Notice】 A Brand-New Launch of OSHWLab (EasyEDA's open source hardware platform)!&nbsp;
            <svg width="17" height="16" viewBox="0 0 17 16" aria-hidden>
              <path d="M1 15.500L5 6L10 11z" fill="#f0b429" stroke="#222" strokeWidth=".8" />
              <path d="M5 5L4 1L7 3L8 6L10 5L12 8L15 9L13 11L15 14L11 12L9 10z" fill="#222" /><path d="M7 5l2 2M11 10l2 .5" stroke="#c33" />
            </svg>
            More surprises await you! &gt;&gt;&gt;
          </a>
          <IconBtn aria-label="Close notice">
            <svg width="15" height="15" viewBox="0 0 15 15" aria-hidden><circle cx="7.500" cy="7.500" r="7" fill="#2c2c1c" /><path d="M4.500 4.500l6 6m0-6l-6 6" stroke="#f6f892" strokeWidth="1.800" /></svg>
          </IconBtn>
        </Notice>
        <Bar role="toolbar">
          <Tools items={g1} /><Sep /><Tools items={g2} />
          <BarSelect $w={83}><select aria-label="Display mode"><option>Normal ...</option></select><Chevron /></BarSelect>
          <BarSelect $w={56}><select aria-label="Unit"><option>mm</option></select><Chevron /></BarSelect>
          <Tool aria-label="Grid"><Icon d="M.7 .7H15.300V15.300H.7z" w={1.3}><path d="M3.500 4H13M3.500 8H13M3.500 12H13" strokeWidth="1.500" strokeDasharray="1.500 2" /></Icon></Tool>
          <Sep /><Tools items={g3} /><Sep /><Tools items={g4} />
          <BarSelect $w={83} $off><select disabled aria-label="Line angle"><option>Line 45°</option></select><Chevron /></BarSelect>
          <Sep /><Tools items={g5} /><Sep /><Tools items={g6} />
        </Bar>

        <Body>
          <Strip $side="left">
            <PinBtn aria-label="Pin"><Pin /></PinBtn>
            <SideTab>All Projects</SideTab><SideTab $on>Project Design</SideTab><SideTab>Common Library</SideTab><SideTab>Device Standardization</SideTab>
          </Strip>
          <LeftPanel>
            <PanelTabs><PanelTab $on>Page</PanelTab><PanelTab>Net</PanelTab><PanelTab>Component</PanelTab><PanelTab>Object</PanelTab></PanelTabs>
            <Search>
              <SearchCell aria-label="Search scope"><Icon d="M7.500 1a6.300 6.300 0 1 0 .01 0zM12 12.500L15 15.500" /></SearchCell>
              <SearchCell $on aria-label="Filter"><Icon size={15} d="M1.500 1H14.500L10 7.500V15L6 12V7.500z" /></SearchCell>
              <input aria-label="Search pages" />
              <IconBtn aria-label="Search"><Icon size={14} w={1.3} d="M7.500 1a6 6 0 1 0 .01 0zM11.500 11.500L14.500 15" /></IconBtn>
            </Search>
            <Tree>
              <TreeRow $depth={0}>
                <Expander open />
                <svg width="15" height="15" viewBox="0 0 16 16" aria-hidden><path d="M.7 15V1.500H6L8 3H15.200V15z" fill="#f7eba8" stroke="#d8bf58" /><path d="M5.500 11V8A2.500 2.500 0 0 1 8 5.800M10.500 7V10A2.500 2.500 0 0 1 8 12.500" fill="none" stroke="#3a7bff" strokeWidth="1.600" /></svg>
                Example_Quick Start
              </TreeRow>
              <TreeRow $depth={1}>
                <Expander open />
                <svg width="15" height="15" viewBox="0 0 16 16" fill="none" stroke="#111" strokeWidth="1.200" aria-hidden><path d="M.6 .6H15.400V15.400H.6z" fill="#0a9d20" /><path d="M1 6H6L9 3.500H11M6 11.500H10L12 9H15" /><circle cx="12.500" cy="4" r="1.800" /><circle cx="4" cy="11.500" r="2" /></svg>
                Waveform Generation and Conversion
              </TreeRow>
              <TreeRow $depth={2}>
                <Expander />
                <svg width="16" height="16" viewBox="0 0 16 16" fill="none" stroke={ACCENT} aria-hidden><path d="M0 3.500H3M3 5.500V.7H13V5M0 9.500H5M2.500 9.500V15M1 15H4M7 5.500H13V15H7zM5 8H7M5 12H7M13 8H16M13 12H16" /></svg>
                Schematic
              </TreeRow>
              <TreeRow $depth={2} $on><Branch /><PcbIcon />PCB</TreeRow>
            </Tree>
          </LeftPanel>
          <VSplit><VGrip $dir="left" /></VSplit>

          <Editor>
            <DocTabs>
              <DocTab><Cloud w={16} c="#4a7ee0" sw={2.4} />Start Page</DocTab>
              <DocTab $on $wide><PcbIcon />PCB</DocTab>
              <DocTab $wide><Green><Dim s="3" /></Green>PCB</DocTab>
            </DocTabs>
            <License>
              <svg width="14" height="14" viewBox="0 0 14 14" aria-hidden><circle cx="7" cy="7" r="7" fill="#ff8833" /><path d="M7 3v5M7 9.500v1.500" stroke="#fff" strokeWidth="1.500" /></svg>
              <p>This project is an open source project(license: <strong>Public Domain</strong>). If you need to edit it, please save as a new project and continue.</p>
              <IconBtn aria-label="Dismiss"><svg width="13" height="13" viewBox="0 0 13 13" fill="none" stroke="#ff8833" aria-hidden><circle cx="6.500" cy="6.500" r="5.500" /><path d="M4.500 4.500l4 4m0-4l-4 4" /></svg></IconBtn>
            </License>
            <HorizontalRuler />
            <Stage>
              <VerticalRuler />
              <StageCol>
                <Canvas><Board /></Canvas>
                <LayerTabs>
                  <Nav><button aria-label="Previous layer"><Prev /></button><button aria-label="Next layer"><Next /></button></Nav>
                  {layerTabs.map(([n, c], i) => <LayerTab key={n} $on={i === 0}><Chip $c={c} />{n}</LayerTab>)}
                </LayerTabs>
              </StageCol>
            </Stage>
          </Editor>
          <VSplit><VGrip $dir="right" /></VSplit>

          <Right>
            <RightTop>
              <LayerPanel>
                <PanelHead>
                  <SelectBox $w={135} $h={24}><select aria-label="Layer configuration"><option>* Common(Defa...</option></select><Chevron /></SelectBox>
                  <ResetBtn>Reset</ResetBtn>
                  <StackBtn aria-label="Layer manager"><Icon size={17} d="M3 1H15L13 5H1zM1 7.500L2 9H6M1 11L2 12.500H6M1 14L2 15.500H6"><circle cx="11.500" cy="11.500" r="3.500" /><circle cx="11.500" cy="11.500" r="1.200" /></Icon></StackBtn>
                </PanelHead>
                <Filters><FilterBtn $on>All</FilterBtn><FilterBtn>Copper</FilterBtn><FilterBtn>Non-Copper</FilterBtn></Filters>
                <ListWrap>
                  <List>
                    {layers.map(([n, c], i) => (
                      <LayerRow key={n} $on={i === 2}>
                        {c ? <Swatch $c={c}>{i === 2 && <Pencil />}</Swatch> : <Fold $hide={i === 0} />}
                        <IconBtn aria-label={`Show ${n}`}><Eye /></IconBtn>
                        <Name>{n}</Name>
                        <IconBtn aria-label={`Lock ${n}`}><Lock closed={n === "57 Ratline"} /></IconBtn>
                      </LayerRow>
                    ))}
                  </List>
                  <Scroll><Thumb /></Scroll>
                </ListWrap>
              </LayerPanel>
              <Strip $side="right">
                <PinBtn aria-label="Pin"><Pin /></PinBtn>
                <SideTab $on>Layer</SideTab><SideTab>Filter</SideTab><SideTab>Property</SideTab>
              </Strip>
            </RightTop>
            <Status>
              <dt>S</dt><dd>139%</dd><dt>G</dt><dd />
              <dt>X</dt><dd>-47.752mm</dd><dt>dX</dt><dd />
              <dt>Y</dt><dd>-58.928mm</dd><dt>dY</dt><dd />
            </Status>
          </Right>
        </Body>
        <HSplit><HGrip /></HSplit>
        <Bottom>
          <BottomPin aria-label="Pin"><Pin /></BottomPin>
          <BottomTab $on>Library</BottomTab><BottomTab><Red />Log</BottomTab><BottomTab>DRC</BottomTab><BottomTab>Find Result</BottomTab>
        </Bottom>
        <Chat>
          <ChatClose aria-label="Close chat"><svg width="17" height="17" viewBox="0 0 17 17" fill="none" stroke="#fff" aria-hidden><circle cx="8.500" cy="8.500" r="7.500" /><path d="M5.500 5.500l6 6m0-6l-6 6" /></svg></ChatClose>
          <svg width="62" height="52" viewBox="0 0 62 52" fill="none" stroke="#fff" strokeWidth="3.500" strokeLinejoin="round" aria-hidden>
            <path d="M40 10V2H2V24H5V32L14 27M18 15H60V42H54L56 49L42 42H18z" />
            <g fill="#fff" stroke="none"><circle cx="12" cy="12" r="2.500" /><circle cx="29" cy="29" r="2.500" /><circle cx="39" cy="29" r="2.500" /><circle cx="49" cy="29" r="2.500" /></g>
          </svg>
          <span>Online Chat</span>
        </Chat>
      </Shell>
    </Frame>
  );
}
